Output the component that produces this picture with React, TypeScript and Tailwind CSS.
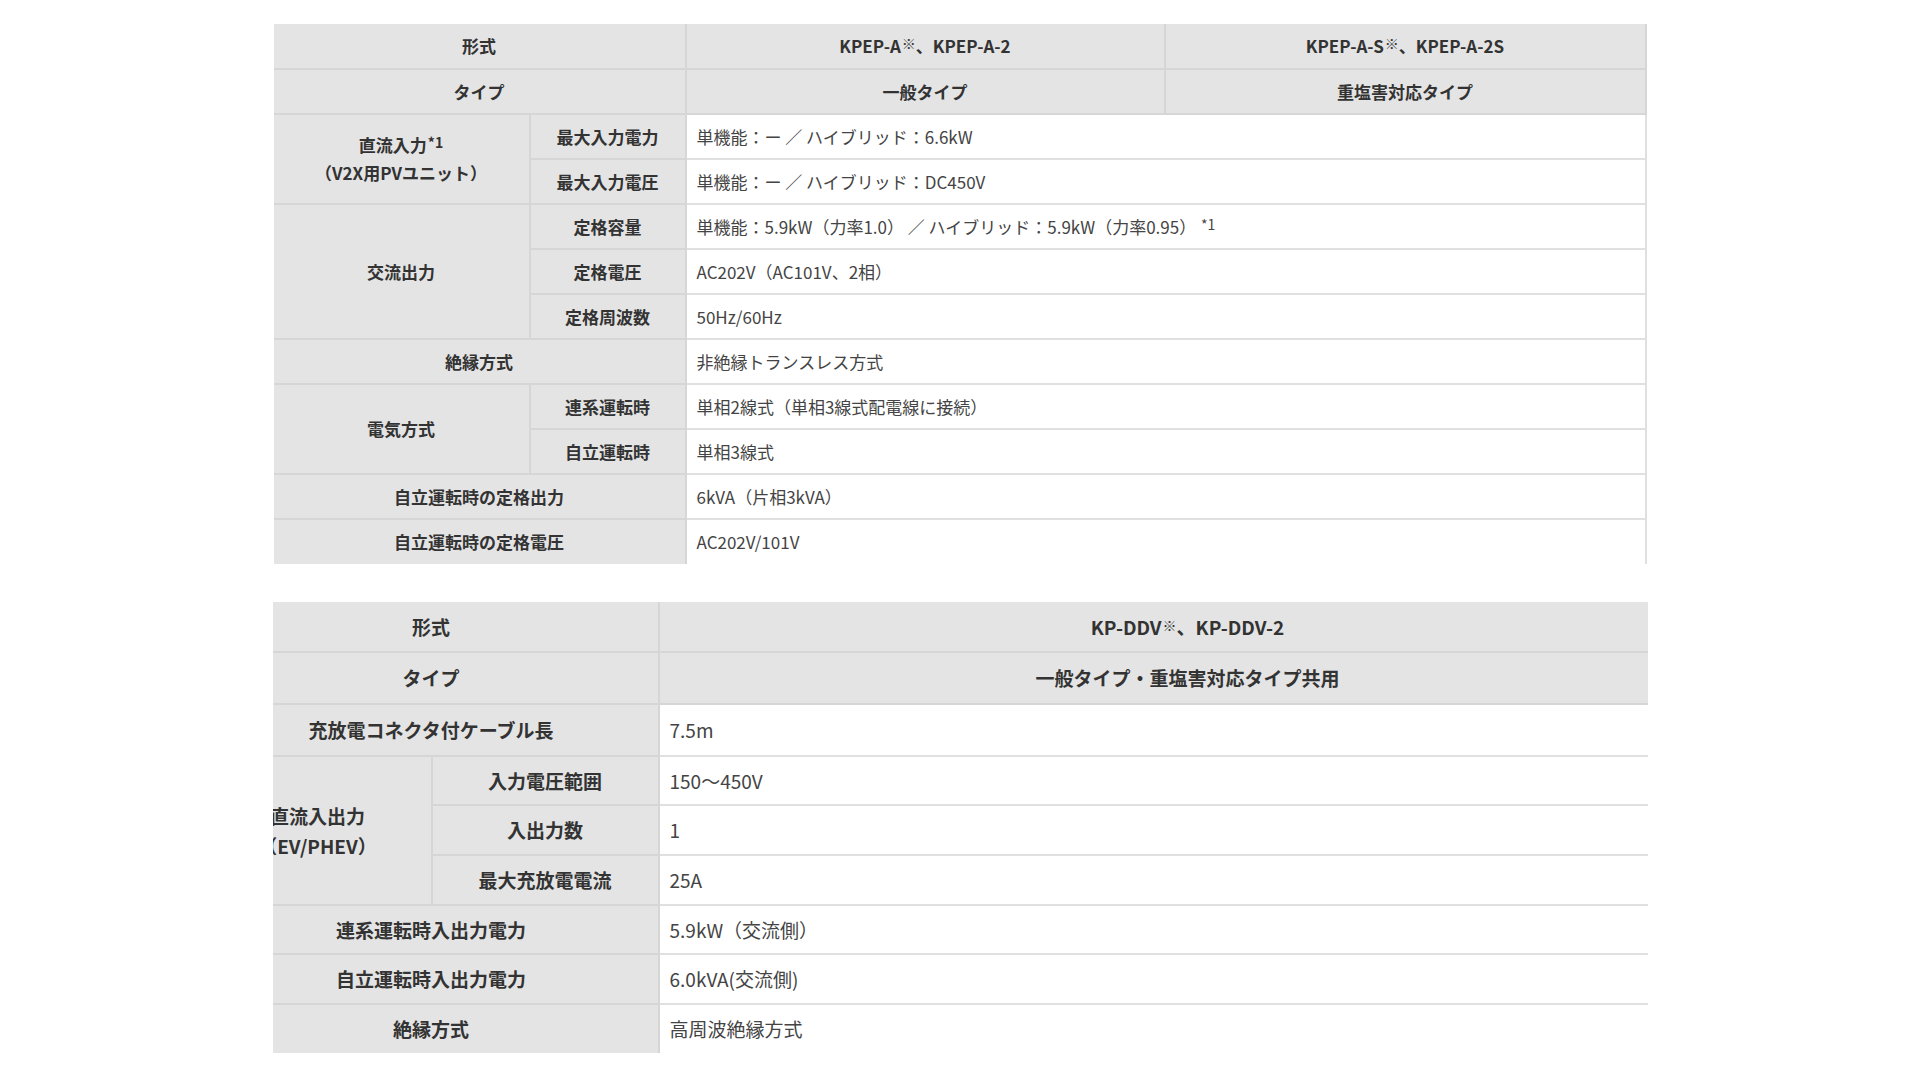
import React from "react";

const th = "bg-[#e4e4e4] border-2 border-[#d6d6d6] font-bold text-[#333] text-center align-middle";
const td = "bg-white border-2 border-[#e0e0e0] text-[#444] text-left align-middle pl-[10px]";

const Sup: React.FC<{ children: React.ReactNode }> = ({ children }) => (
  <sup className="text-[14px] relative -top-[4px] ml-[1px]">{children}</sup>
);

const App: React.FC = () => {
  return (
    <div
      className="w-full min-h-screen bg-white flex flex-col items-center pt-[24px]"
      style={{ fontFamily: '"Noto Sans CJK JP", "Noto Sans", sans-serif' }}
    >
      {/* First spec table */}
      <table className="w-[1372px] border-collapse table-fixed text-[17px] leading-[28px]">
        <colgroup>
          <col className="w-[256px]" />
          <col className="w-[156px]" />
          <col className="w-[479px]" />
          <col className="w-[481px]" />
        </colgroup>
        <tbody>
          <tr className="h-[45px]">
            <th colSpan={2} className={`${th} border-t-0 border-l-0`}>形式</th>
            <th className={`${th} border-t-0`}>KPEP-A<Sup>※</Sup>、KPEP-A-2</th>
            <th className={`${th} border-t-0`}>KPEP-A-S<Sup>※</Sup>、KPEP-A-2S</th>
          </tr>
          <tr className="h-[45px]">
            <th colSpan={2} className={`${th} border-l-0`}>タイプ</th>
            <th className={th}>一般タイプ</th>
            <th className={th}>重塩害対応タイプ</th>
          </tr>
          <tr className="h-[45px]">
            <th rowSpan={2} className={`${th} border-l-0`}>
              直流入力<Sup>*1</Sup>
              <br />（V2X用PVユニット）
            </th>
            <th className={th}>最大入力電力</th>
            <td colSpan={2} className={td}>単機能：ー ／ ハイブリッド：6.6kW</td>
          </tr>
          <tr className="h-[45px]">
            <th className={th}>最大入力電圧</th>
            <td colSpan={2} className={td}>単機能：ー ／ ハイブリッド：DC450V</td>
          </tr>
          <tr className="h-[45px]">
            <th rowSpan={3} className={`${th} border-l-0`}>交流出力</th>
            <th className={th}>定格容量</th>
            <td colSpan={2} className={td}>
              単機能：5.9kW（力率1.0） ／ ハイブリッド：5.9kW（力率0.95） <Sup>*1</Sup>
            </td>
          </tr>
          <tr className="h-[45px]">
            <th className={th}>定格電圧</th>
            <td colSpan={2} className={td}>AC202V（AC101V、2相）</td>
          </tr>
          <tr className="h-[45px]">
            <th className={th}>定格周波数</th>
            <td colSpan={2} className={td}>50Hz/60Hz</td>
          </tr>
          <tr className="h-[45px]">
            <th colSpan={2} className={`${th} border-l-0`}>絶縁方式</th>
            <td colSpan={2} className={td}>非絶縁トランスレス方式</td>
          </tr>
          <tr className="h-[45px]">
            <th rowSpan={2} className={`${th} border-l-0`}>電気方式</th>
            <th className={th}>連系運転時</th>
            <td colSpan={2} className={td}>単相2線式（単相3線式配電線に接続）</td>
          </tr>
          <tr className="h-[45px]">
            <th className={th}>自立運転時</th>
            <td colSpan={2} className={td}>単相3線式</td>
          </tr>
          <tr className="h-[45px]">
            <th colSpan={2} className={`${th} border-l-0`}>自立運転時の定格出力</th>
            <td colSpan={2} className={td}>6kVA（片相3kVA）</td>
          </tr>
          <tr className="h-[45px]">
            <th colSpan={2} className={`${th} border-l-0 border-b-0`}>自立運転時の定格電圧</th>
            <td colSpan={2} className={`${td} border-b-0`}>AC202V/101V</td>
          </tr>
        </tbody>
      </table>

      {/* Second spec table, clipped by its scroll box */}
      <div className="w-[1375px] overflow-hidden mt-[38px]">
        <table className="w-[1513px] ml-[-70px] border-collapse table-fixed text-[19px] leading-[30px]">
          <colgroup>
            <col className="w-[228px]" />
            <col className="w-[227px]" />
            <col className="w-[1058px]" />
          </colgroup>
          <tbody>
            <tr className="h-[50px]">
              <th colSpan={2} className={`${th} border-t-0`}>形式</th>
              <th className={`${th} border-t-0`}>KP-DDV<Sup>※</Sup>、KP-DDV-2</th>
            </tr>
            <tr className="h-[52px]">
              <th colSpan={2} className={th}>タイプ</th>
              <th className={th}>一般タイプ・重塩害対応タイプ共用</th>
            </tr>
            <tr className="h-[52px]">
              <th colSpan={2} className={th}>充放電コネクタ付ケーブル長</th>
              <td className={td}>7.5m</td>
            </tr>
            <tr className="h-[49px]">
              <th rowSpan={3} className={th}>
                直流入出力
                <br />（EV/PHEV）
              </th>
              <th className={th}>入力電圧範囲</th>
              <td className={td}>150～450V</td>
            </tr>
            <tr className="h-[50px]">
              <th className={th}>入出力数</th>
              <td className={td}>1</td>
            </tr>
            <tr className="h-[50px]">
              <th className={th}>最大充放電電流</th>
              <td className={td}>25A</td>
            </tr>
            <tr className="h-[49px]">
              <th colSpan={2} className={th}>連系運転時入出力電力</th>
              <td className={td}>5.9kW（交流側）</td>
            </tr>
            <tr className="h-[50px]">
              <th colSpan={2} className={th}>自立運転時入出力電力</th>
              <td className={td}>6.0kVA(交流側)</td>
            </tr>
            <tr className="h-[49px]">
              <th colSpan={2} className={`${th} border-b-0`}>絶縁方式</th>
              <td className={`${td} border-b-0`}>高周波絶縁方式</td>
            </tr>
          </tbody>
        </table>
      </div>
    </div>
  );
};

export default App;
